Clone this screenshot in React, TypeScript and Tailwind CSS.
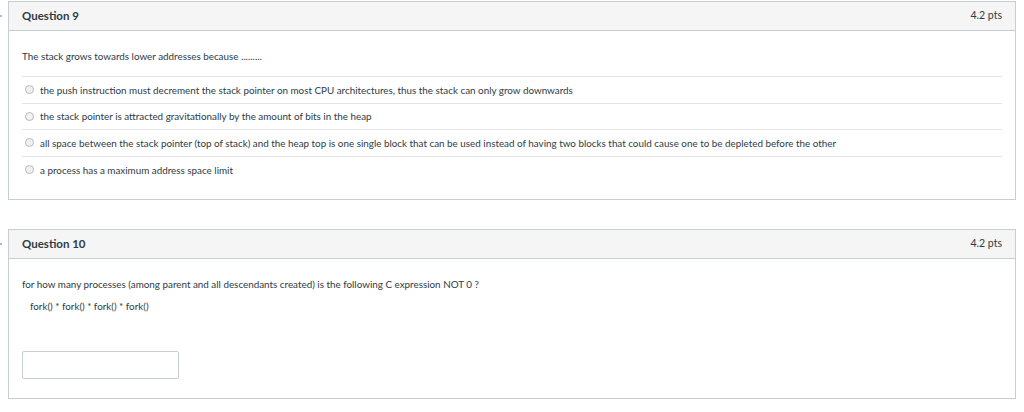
import React from 'react';

const answers = [
  'the push instruction must decrement the stack pointer on most CPU architectures, thus the stack can only grow downwards',
  'the stack pointer is attracted gravitationally by the amount of bits in the heap',
  'all space between the stack pointer (top of stack) and the heap top is one single block that can be used instead of having two blocks that could cause one to be depleted before the other',
  'a process has a maximum address space limit',
];

function Header({ title }: { title: string }) {
  return (
    <div className="relative flex h-[29px] items-center justify-between border-b border-[#c7cdd1] bg-[#f5f5f5] pl-[13px] pr-[13px]">
      <span className="absolute -left-[9px] top-[13px] h-[2px] w-[2px] rounded-full bg-[#9aa5ad]" />
      <h3 className="text-[11.5px] font-bold text-[#2d3b45]">{title}</h3>
      <span className="text-[10.5px] text-[#2d3b45]">4.2 pts</span>
    </div>
  );
}

export default function App() {
  return (
    <div className="min-h-[412px] bg-white pt-[1px] pl-[8px] pr-[8px] text-[#2d3b45]" style={{ fontFamily: 'Lato, "Open Sans", sans-serif' }}>
      <div className="h-[199px] border border-[#c7cdd1]">
        <Header title="Question 9" />
        <div className="px-[13px] pt-[19px]">
          <p className="text-[9.85px] leading-[12px]">The stack grows towards lower addresses because .........</p>
          <div className="mt-[14px] border-t border-[#e3e6e8]">
            {answers.map((a, i) => (
              <div key={i} className={`flex h-[26.5px] items-center gap-[6px] pl-[3px] ${i < answers.length - 1 ? 'border-b border-[#e3e6e8]' : ''}`}>
                <span className="h-[9px] w-[9px] shrink-0 rounded-full border border-[#b4b9bd] bg-[#f1f1f1]" />
                <span className="text-[9.85px] leading-[12px]">{a}</span>
              </div>
            ))}
          </div>
        </div>
      </div>

      <div className="mt-[29px] h-[170px] border border-[#c7cdd1]">
        <Header title="Question 10" />
        <div className="px-[13px] pt-[19px]">
          <p className="text-[9.85px] leading-[12px]">
            for how many processes (among parent and all descendants created) is the following C expression NOT 0 ?
          </p>
          <p className="mt-[10px] pl-[8px] text-[9.85px] leading-[12px]">fork() * fork() * fork() * fork()</p>
          <input
            type="text"
            className="mt-[39px] block h-[28px] w-[157px] rounded-[2px] border border-[#c7cdd1] bg-white outline-none"
          />
        </div>
      </div>
    </div>
  );
}
